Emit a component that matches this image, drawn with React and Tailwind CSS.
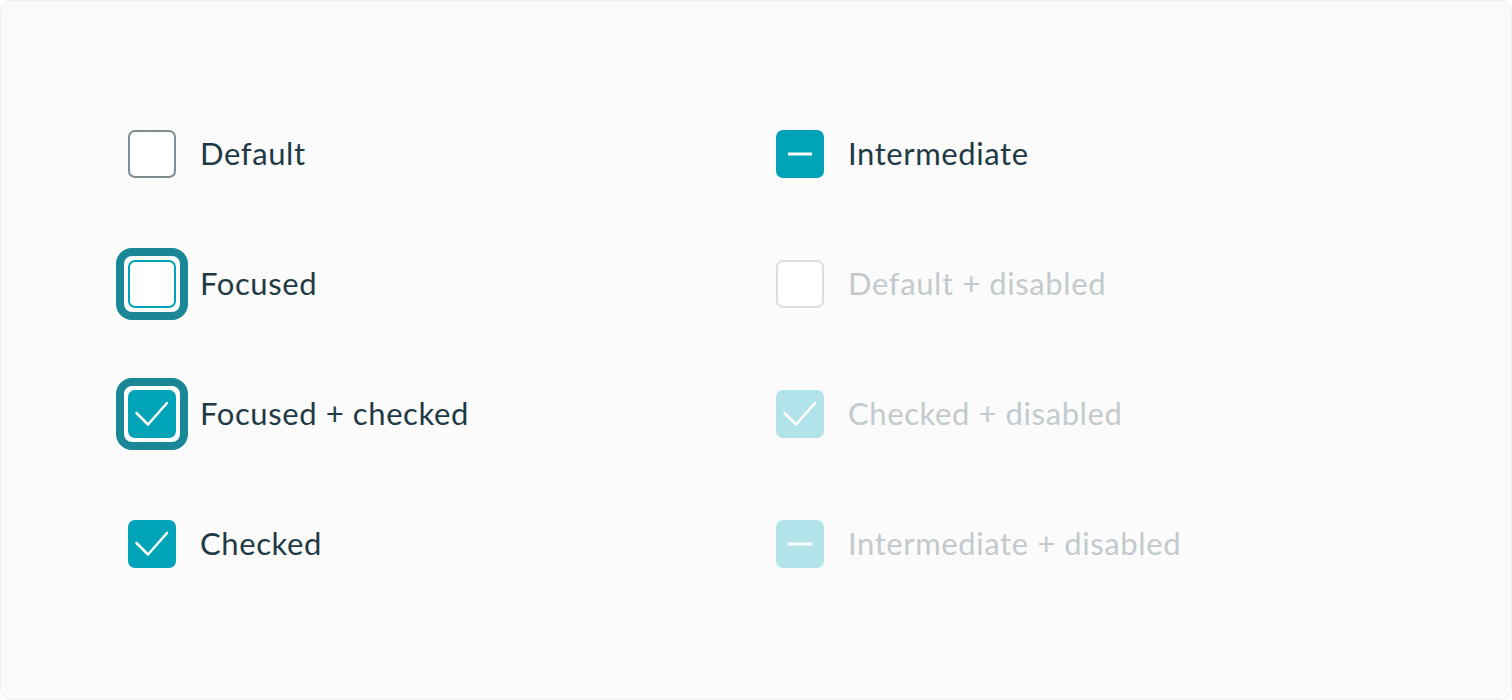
import React from "react";

const Check = ({ color = "#ffffff" }) => (
  <svg width="48" height="48" viewBox="0 0 48 48" className="absolute inset-0">
    <path d="M8.5 23 L20 34.5 L39 13" fill="none" stroke={color} strokeWidth="2.5" strokeLinecap="round" strokeLinejoin="round" />
  </svg>
);

const Minus = () => (
  <svg width="48" height="48" viewBox="0 0 48 48" className="absolute inset-0">
    <path d="M12 24 H36" fill="none" stroke="#ffffff" strokeWidth="3" strokeLinecap="butt" />
  </svg>
);

function Box({ kind }) {
  if (kind === "default")
    return <div className="relative w-12 h-12 rounded-[7px] border-2 border-[#7d8d94] bg-white" />;
  if (kind === "focused")
    return (
      <div className="relative -m-3 rounded-[16px] border-[8px] border-[#1a8796] bg-white p-1">
        <div className="w-12 h-12 rounded-[7px] border-2 border-[#00a3b8] bg-white" />
      </div>
    );
  if (kind === "focusedChecked")
    return (
      <div className="relative -m-3 rounded-[16px] border-[8px] border-[#1a8796] bg-white p-1">
        <div className="relative w-12 h-12 rounded-[7px] bg-[#00a3b8]">
          <Check />
        </div>
      </div>
    );
  if (kind === "checked")
    return (
      <div className="relative w-12 h-12 rounded-[7px] bg-[#00a3b8]">
        <Check />
      </div>
    );
  if (kind === "indeterminate")
    return (
      <div className="relative w-12 h-12 rounded-[7px] bg-[#00a3b8]">
        <Minus />
      </div>
    );
  if (kind === "disabled")
    return <div className="relative w-12 h-12 rounded-[7px] border-2 border-[#d9dfe1] bg-white" />;
  if (kind === "checkedDisabled")
    return (
      <div className="relative w-12 h-12 rounded-[7px] bg-[#b2e3ea]">
        <Check />
      </div>
    );
  return (
    <div className="relative w-12 h-12 rounded-[7px] bg-[#b2e3ea]">
      <Minus />
    </div>
  );
}

function Row({ kind, label, disabled }) {
  return (
    <div className="flex items-center h-12 gap-[24px]">
      <div className="w-12 h-12 flex items-center justify-center shrink-0">
        <Box kind={kind} />
      </div>
      <span
        className={`text-[31px] leading-none tracking-[0.6px] -mt-[2px] ${disabled ? "text-[#c2cace]" : "text-[#1f3a45]"}`}
        style={{ fontFamily: "Lato, 'Open Sans', sans-serif" }}
      >
        {label}
      </span>
    </div>
  );
}

export default function App() {
  return (
    <div className="w-[1512px] h-[700px] bg-white">
      <div className="w-full h-full rounded-[12px] border border-[#eeeeee] bg-[#fbfbfb] pl-[127px] pt-[129px]">
        <div className="grid grid-cols-[648px_1fr] gap-y-[82px]">
          <Row kind="default" label="Default" />
          <Row kind="indeterminate" label="Intermediate" />
          <Row kind="focused" label="Focused" />
          <Row kind="disabled" label="Default + disabled" disabled />
          <Row kind="focusedChecked" label="Focused + checked" />
          <Row kind="checkedDisabled" label="Checked + disabled" disabled />
          <Row kind="checked" label="Checked" />
          <Row kind="indeterminateDisabled" label="Intermediate + disabled" disabled />
        </div>
      </div>
    </div>
  );
}
